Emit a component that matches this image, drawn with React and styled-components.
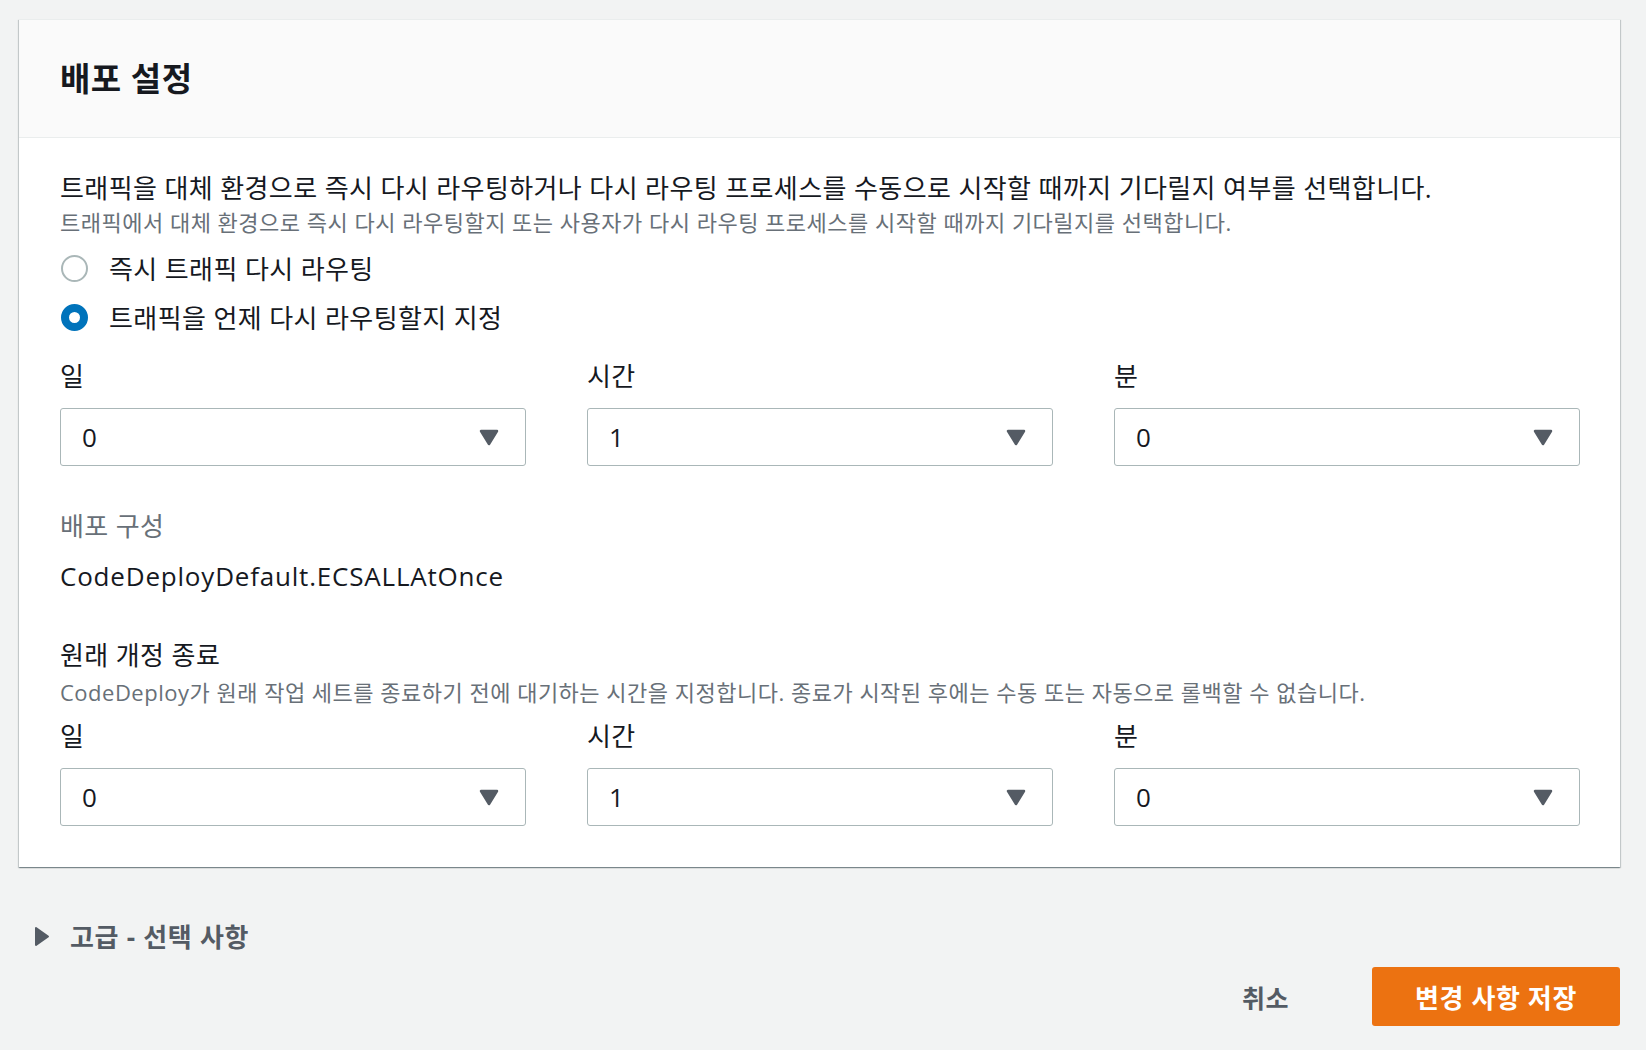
import React from 'react'
import styled, { createGlobalStyle } from 'styled-components'

const GlobalStyle = createGlobalStyle`
  html, body {
    margin: 0;
    padding: 0;
    background: #f2f3f3;
  }
  body {
    font-family: "Open Sans", "Noto Sans CJK KR", sans-serif;
    color: #16191f;
  }
`

const TIME_FIELDS = [
    { label: '일', value: '0' },
    { label: '시간', value: '1' },
    { label: '분', value: '0' },
]

const Caret = () => (
    <svg width="20" height="17" viewBox="0 0 20 17">
        <path d="M2 2 H18 L10 15 Z" fill="#545b64" stroke="#545b64" strokeWidth="2.5" strokeLinejoin="round" />
    </svg>
)

const Expander = () => (
    <svg width="16" height="21" viewBox="0 0 16 21">
        <path d="M2 2 L14 10.5 L2 19 Z" fill="#545b64" stroke="#545b64" strokeWidth="2" strokeLinejoin="round" />
    </svg>
)

const Radio = ({ checked, children }) => (
    <RadioRow>
        <RadioDot $checked={checked} />
        <RadioLabel>{children}</RadioLabel>
    </RadioRow>
)

const TimeRow = ({ top }) => (
    <Grid $top={top}>
        {TIME_FIELDS.map((f) => (
            <Field key={f.label}>
                <FieldLabel>{f.label}</FieldLabel>
                <Select>
                    <span>{f.value}</span>
                    <Caret />
                </Select>
            </Field>
        ))}
    </Grid>
)

const App = () => {
    return (
        <Page>
            <GlobalStyle />
            <Card>
                <CardHeader>
                    <Title>배포 설정</Title>
                </CardHeader>
                <CardBody>
                    <Text>트래픽을 대체 환경으로 즉시 다시 라우팅하거나 다시 라우팅 프로세스를 수동으로 시작할 때까지 기다릴지 여부를 선택합니다.</Text>
                    <Hint>트래픽에서 대체 환경으로 즉시 다시 라우팅할지 또는 사용자가 다시 라우팅 프로세스를 시작할 때까지 기다릴지를 선택합니다.</Hint>
                    <RadioGroup>
                        <Radio>즉시 트래픽 다시 라우팅</Radio>
                        <Radio checked>트래픽을 언제 다시 라우팅할지 지정</Radio>
                    </RadioGroup>
                    <TimeRow top={22} />

                    <Section $gap={43}>
                        <MutedLabel>배포 구성</MutedLabel>
                        <Value>CodeDeployDefault.ECSALLAtOnce</Value>
                    </Section>

                    <Section $gap={45}>
                        <Text>원래 개정 종료</Text>
                        <Hint $top={3}>CodeDeploy가 원래 작업 세트를 종료하기 전에 대기하는 시간을 지정합니다. 종료가 시작된 후에는 수동 또는 자동으로 롤백할 수 없습니다.</Hint>
                    </Section>
                    <TimeRow top={10} />
                </CardBody>
            </Card>

            <Advanced>
                <Expander />
                <span>고급 - 선택 사항</span>
            </Advanced>

            <Actions>
                <LinkButton>취소</LinkButton>
                <PrimaryButton>변경 사항 저장</PrimaryButton>
            </Actions>
        </Page>
    )
}

export default App

const Page = styled.div`
    padding: 19px 26px 0 19px;
    min-height: 1031px;
`

const Card = styled.div`
    background: #fff;
    box-shadow: 0 1px 1px 0 rgba(0, 28, 36, 0.3), 1px 1px 1px 0 rgba(0, 28, 36, 0.15), -1px 1px 1px 0 rgba(0, 28, 36, 0.15);
    border-top: 1px solid #eaeded;
`

const CardHeader = styled.div`
    height: 117px;
    display: flex;
    align-items: center;
    padding: 0 41px;
    background: #fafafa;
    border-bottom: 1px solid #eaeded;
`

const Title = styled.h2`
    margin: 0 0 4px;
    font-size: 33px;
    font-weight: 700;
    letter-spacing: 0.5px;
    color: #16191f;
`

const CardBody = styled.div`
    padding: 33px 40px 41px 41px;
`

const Text = styled.div`
    font-size: 26px;
    line-height: 34px;
    letter-spacing: 0.4px;
    color: #16191f;
`

const Hint = styled.div`
    margin-top: ${(p) => p.$top || 0}px;
    font-size: 22px;
    line-height: 34px;
    letter-spacing: 0.5px;
    color: #687078;
`

const RadioGroup = styled.div`
    display: flex;
    flex-direction: column;
    gap: 9px;
    margin-top: 9px;
`

const RadioRow = styled.label`
    display: flex;
    align-items: center;
    height: 40px;
    gap: 21px;
`

const RadioDot = styled.span`
    box-sizing: border-box;
    width: 27px;
    height: 27px;
    margin-left: 1px;
    border-radius: 50%;
    background: #fff;
    border: ${(p) => (p.$checked ? '8px solid #0073bb' : '2px solid #aab7b8')};
`

const RadioLabel = styled.span`
    font-size: 26px;
    letter-spacing: 0.4px;
    color: #16191f;
`

const Grid = styled.div`
    display: grid;
    grid-template-columns: repeat(3, 1fr);
    column-gap: 61px;
    margin-top: ${(p) => p.$top}px;
`

const Field = styled.div`
    display: flex;
    flex-direction: column;
`

const FieldLabel = styled.div`
    font-size: 26px;
    line-height: 34px;
    letter-spacing: 0.4px;
    margin-bottom: 15px;
    color: #16191f;
`

const Select = styled.div`
    box-sizing: border-box;
    height: 58px;
    display: flex;
    align-items: center;
    justify-content: space-between;
    padding: 0 26px 0 21px;
    border: 1.5px solid #aab7b8;
    border-radius: 3px;
    background: #fff;
    font-size: 26px;
    color: #16191f;

    svg {
        margin-top: 1px;
    }
`

const Section = styled.div`
    margin-top: ${(p) => p.$gap}px;
`

const MutedLabel = styled.div`
    font-size: 26px;
    line-height: 34px;
    letter-spacing: 0.4px;
    color: #687078;
`

const Value = styled.div`
    margin-top: 16px;
    font-size: 26px;
    line-height: 34px;
    letter-spacing: 0.8px;
    color: #16191f;
`

const Advanced = styled.div`
    display: flex;
    align-items: center;
    gap: 20px;
    height: 34px;
    margin-top: 52px;
    padding-left: 15px;
    font-size: 26px;
    font-weight: 700;
    letter-spacing: 0.7px;
    color: #545b64;
`

const Actions = styled.div`
    display: flex;
    justify-content: flex-end;
    align-items: center;
    gap: 43px;
    margin-top: 14px;
`

const LinkButton = styled.button`
    border: none;
    background: none;
    padding: 0 40px;
    height: 59px;
    font-family: inherit;
    font-size: 25px;
    font-weight: 700;
    letter-spacing: 0.5px;
    color: #545b64;
`

const PrimaryButton = styled.button`
    border: none;
    border-radius: 3px;
    background: #ec7211;
    height: 59px;
    width: 248px;
    font-family: inherit;
    font-size: 26px;
    font-weight: 700;
    letter-spacing: 0.6px;
    color: #fff;
`
